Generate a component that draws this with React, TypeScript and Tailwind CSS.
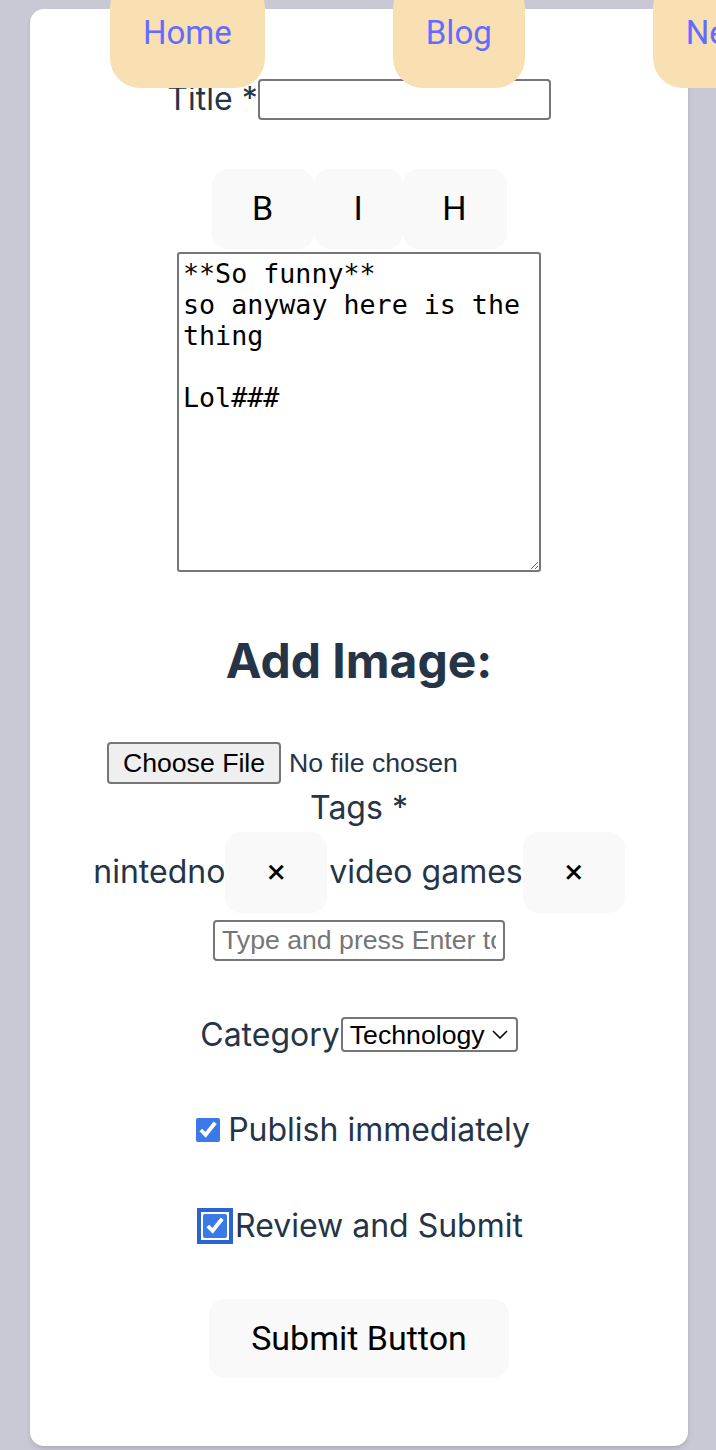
import React from "react";

const btn =
  "font-['Roboto',sans-serif] font-normal text-[34px] leading-[37.5px] text-black bg-[#f9f9f9] border-2 border-transparent rounded-[16px] py-[19px]";

export default function App() {
  return (
    <div className="relative min-h-[1450px] w-[716px] overflow-hidden bg-[#c9c8d5] font-['Inter',sans-serif] text-[#253446]">
      <div className="mx-[30px] mt-[9px] flex w-[658px] flex-col items-center rounded-[14px] bg-white pt-[70px] pb-[68px] shadow-md">
        {/* Title */}
        <div className="flex h-[41px] items-center">
          <label className="relative top-[-1px] text-[32px] leading-[48px]">Title *</label>
          <input
            type="text"
            className="h-[41px] w-[293px] rounded-[4px] border-2 border-[#767676] bg-white px-[4px] text-[26.67px]"
          />
        </div>

        {/* Toolbar */}
        <div className="mt-[49px] flex">
          <button className={`${btn} w-[102px]`}>B</button>
          <button className={`${btn} w-[89px]`}>I</button>
          <button className={`${btn} w-[104px]`}>H</button>
        </div>

        <textarea
          className="mt-[3px] h-[320px] w-[364px] resize rounded-[3px] border-2 border-[#767676] bg-white p-[4px] font-['DejaVu_Sans_Mono',monospace] text-[26.67px] leading-[31px] text-black"
          defaultValue={"**So funny**\nso anyway here is the thing\n\nLol###"}
        />

        <h2 className="mt-[60px] text-[48px] font-bold leading-[58px]">Add Image:</h2>

        {/* File input */}
        <div className="mt-[52px] flex h-[42px] w-[504px] items-center font-['Liberation_Sans',Arial,sans-serif] text-[26.67px]">
          <span className="flex h-[42px] w-[174px] items-center justify-center rounded-[4px] border-2 border-[#767676] bg-[#efefef] text-black">
            Choose File
          </span>
          <span className="ml-[8px]">No file chosen</span>
        </div>

        <div className="text-[32px] leading-[48px]">Tags *</div>

        {/* Tags */}
        <div className="flex h-[81px] items-center text-[32px]">
          <span>nintedno</span>
          <button className={`${btn} h-[81px] w-[102px] px-0`}>×</button>
          <span className="ml-[2px]">video games</span>
          <button className={`${btn} h-[81px] w-[102px] px-0`}>×</button>
        </div>

        <input
          type="text"
          placeholder="Type and press Enter to add tags"
          className="mt-[7px] h-[41px] w-[292px] rounded-[4px] border-2 border-[#767676] bg-white px-[7px] font-['Liberation_Sans',Arial,sans-serif] text-[26.67px] text-black placeholder:text-[#757575]"
        />

        {/* Category */}
        <div className="mt-[50px] flex h-[48px] items-center">
          <label className="text-[32px] leading-[48px]">Category</label>
          <div className="ml-[1px] flex h-[35px] w-[177px] items-center justify-between rounded-[4px] border-2 border-[#767676] bg-white pl-[7px] pr-[8px] font-['Liberation_Sans',Arial,sans-serif] text-[26.67px] text-black">
            <span>Technology</span>
            <svg width="16" height="9" viewBox="0 0 16 9" fill="none">
              <path d="M1 1l7 7 7-7" stroke="#000" strokeWidth="1.6" />
            </svg>
          </div>
        </div>

        {/* Publish */}
        <label className="mt-[47px] flex h-[48px] items-center text-[32px] leading-[48px]">
          <input
            type="checkbox"
            defaultChecked
            className="ml-[8px] mr-[8px] h-[24px] w-[24px] accent-[#3b78e8]"
          />
          Publish immediately
        </label>

        {/* Review */}
        <label className="mt-[48px] flex h-[48px] items-center text-[32px] leading-[48px]">
          <input
            type="checkbox"
            defaultChecked
            className="ml-[8px] mr-[8px] h-[24px] w-[24px] rounded-[4px] accent-[#3b78e8] outline-[4px] outline-offset-[2px] outline-[#2c62d2]"
          />
          Review and Submit
        </label>

        <button className={`${btn} mt-[49px] px-[40px]`}>Submit Button</button>
      </div>

      {/* Nav */}
      <nav className="absolute left-[110px] top-[-22px] flex gap-[128px]">
        {["Home", "Blog", "New Post"].map((t) => (
          <a
            key={t}
            className="whitespace-nowrap rounded-[30px] bg-[#f9e0b3] px-[33px] py-[36px] font-['Roboto',sans-serif] text-[33px] font-normal leading-[38px] text-[#646cff]"
          >
            {t}
          </a>
        ))}
      </nav>
    </div>
  );
}
